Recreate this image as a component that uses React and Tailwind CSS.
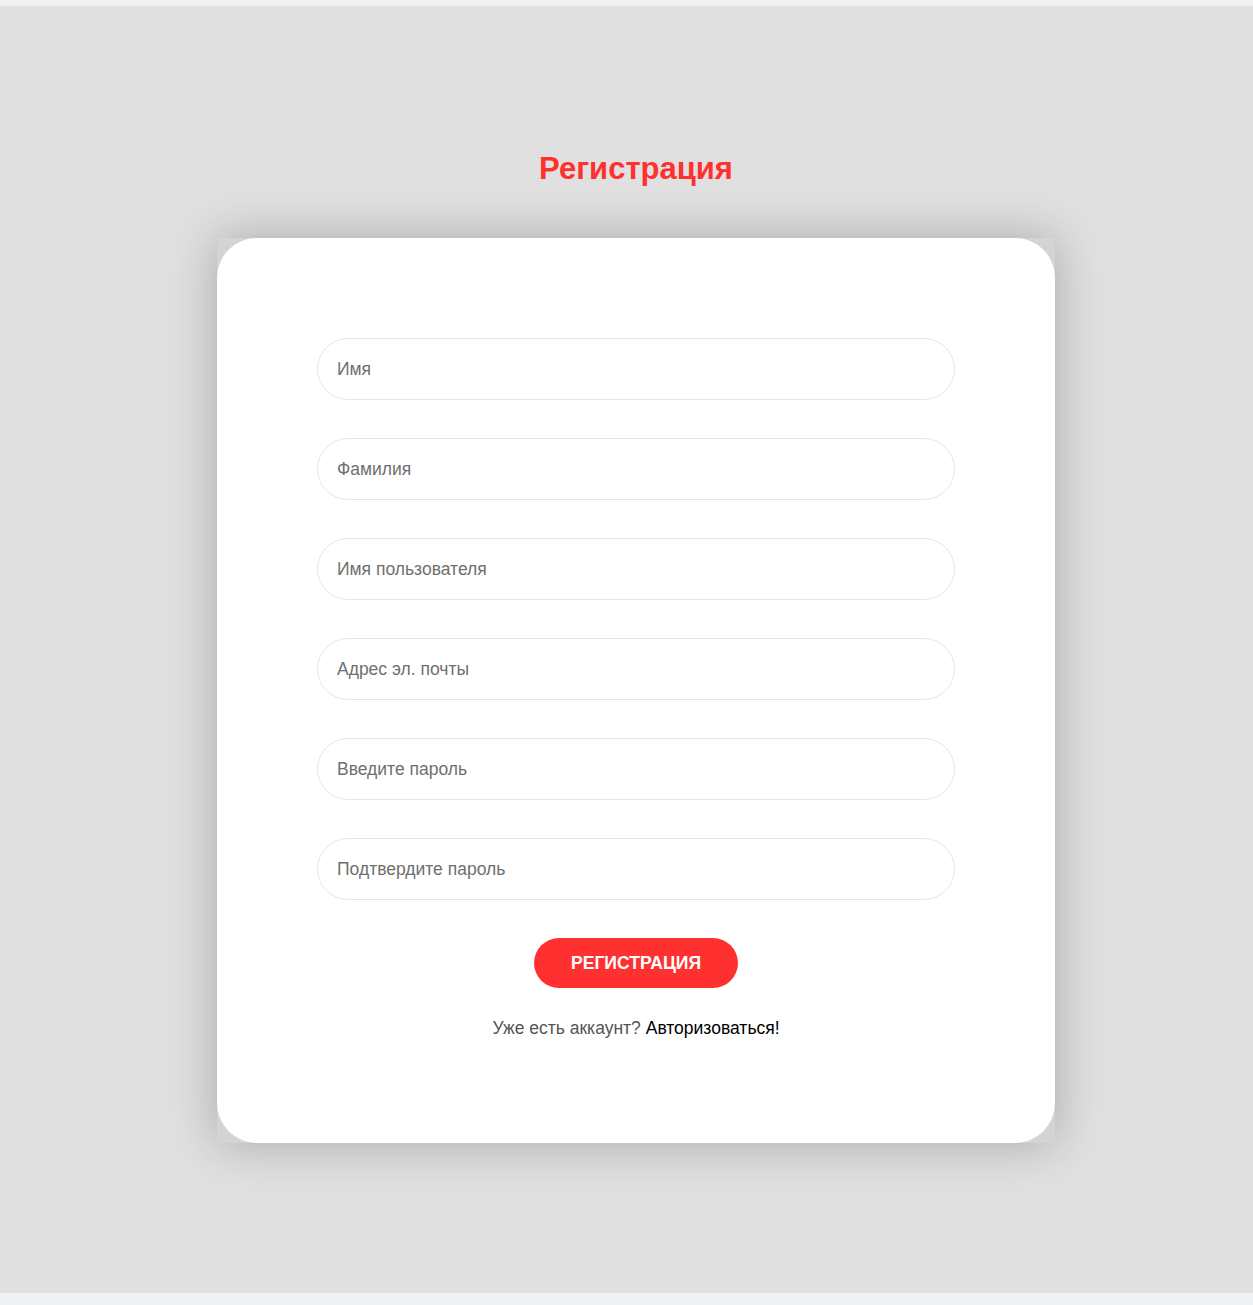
import React from 'react';

const fields = [
  { name: 'first_name', type: 'text', placeholder: 'Имя' },
  { name: 'last_name', type: 'text', placeholder: 'Фамилия' },
  { name: 'username', type: 'text', placeholder: 'Имя пользователя' },
  { name: 'email', type: 'email', placeholder: 'Адрес эл. почты' },
  { name: 'password1', type: 'password', placeholder: 'Введите пароль' },
  { name: 'password2', type: 'password', placeholder: 'Подтвердите пароль' },
];

const App = () => {
  return (
    <div className="min-h-[1305px] bg-[#eef2f5] pt-[6px] pb-[12px] font-['Liberation_Sans',Arial,sans-serif]">
      <section className="h-[1287px] bg-[#dfe0df] flex flex-col items-center pt-[145px] pl-[19px]">
        <h1 className="text-[31px] leading-[36px] font-bold text-[#ff3030]">Регистрация</h1>

        <div className="mt-[51px] w-[838px] bg-[#d3d4d3] shadow-[0_0_45px_rgba(0,0,0,0.25)]">
          <form className="bg-white rounded-[40px] px-[100px] pt-[100px] pb-[105px] flex flex-col items-center">
            <div className="w-full flex flex-col gap-[38px]">
              {fields.map((f) => (
                <input
                  key={f.name}
                  type={f.type}
                  name={f.name}
                  placeholder={f.placeholder}
                  className="w-full h-[62px] rounded-full border border-[#e6e6e6] bg-white px-[19px] text-[17.5px] text-[#333] placeholder:text-[#6f6f6f] outline-none"
                />
              ))}
            </div>

            <button
              type="submit"
              className="mt-[38px] w-[204px] h-[50px] rounded-full bg-[#ff3030] text-white text-[17.6px] font-bold uppercase"
            >
              Регистрация
            </button>

            <p className="mt-[30px] text-[17.5px] leading-[20px] text-[#555]">
              Уже есть аккаунт? <a href="#" className="text-black">Авторизоваться!</a>
            </p>
          </form>
        </div>
      </section>
    </div>
  );
};

export default App;
